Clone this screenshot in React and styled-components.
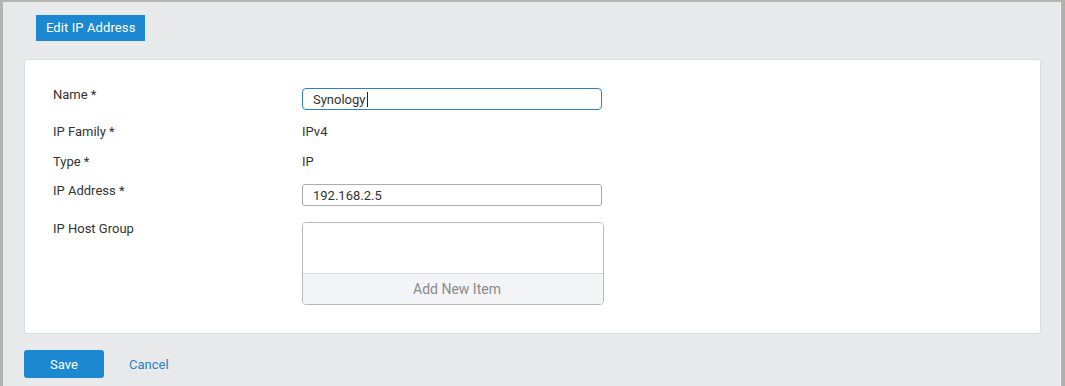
import React from "react";
import styled, { createGlobalStyle } from "styled-components";

const Global = createGlobalStyle`
  html, body { margin: 0; padding: 0; }
  body {
    font-family: Roboto, "Liberation Sans", Arial, sans-serif;
    background: #b4b4b0;
  }
  * { box-sizing: border-box; }
`;

const Frame = styled.div`
  min-height: 100vh;
  background: #e8e9eb;
  border-left: 3px solid #b4b4b0;
  border-top: 2px solid #b4b4b0;
  border-right: 4px solid #b0b0ac;
  border-top-left-radius: 3px;
  border-top-right-radius: 3px;
  box-shadow: inset -1px 0 0 #f2f2f2;
  padding: 13px 20px 8px 21px;
  display: flex;
  flex-direction: column;
`;

const Tab = styled.div`
  align-self: flex-start;
  margin-left: 12px;
  height: 26px;
  padding: 0 10px 0 10px;
  background: #1b88d1;
  color: #fff;
  font-size: 13px;
  letter-spacing: 0.1px;
  line-height: 26px;
`;

const Panel = styled.div`
  margin-top: 18px;
  background: #fff;
  border: 1px solid #dcdde0;
  border-radius: 3px;
  padding: 28px 28px 28px 28px;
  display: flex;
  flex-direction: column;
`;

const Row = styled.div`
  display: grid;
  grid-template-columns: 249px 1fr;
  align-items: start;
  margin-top: ${(p) => p.$gap || 0}px;
`;

const Label = styled.div`
  font-size: 13px;
  line-height: 14px;
  padding-bottom: 2px;
  color: #333;
`;

const Value = styled.div`
  font-size: 13px;
  line-height: 14px;
  padding-bottom: 2px;
  color: #333;
`;

const Field = styled.div`
  width: 300px;
  height: 22px;
  border: 1px solid ${(p) => (p.$focus ? "#2a7fc6" : "#a9abae")};
  border-radius: ${(p) => (p.$focus ? 4 : 3)}px;
  padding: 0 10px;
  display: flex;
  align-items: center;
  font-size: 13px;
  color: #333;
  background: #fff;
`;

const Caret = styled.span`
  display: inline-block;
  width: 1px;
  height: 15px;
  background: #222;
  margin-left: 1px;
`;

const ListBox = styled.div`
  width: 302px;
  height: 83px;
  border: 1px solid #b7babe;
  border-radius: 4px;
  display: flex;
  flex-direction: column;
  overflow: hidden;
`;

const ListBody = styled.div`
  flex: 1;
  background: #fff;
`;

const ListFooter = styled.div`
  height: 31px;
  border-top: 1px solid #d6d9dd;
  background: #f3f4f6;
  color: #888a8c;
  font-size: 14px;
  padding-left: 8px;
  display: flex;
  align-items: center;
  justify-content: center;
`;

const Actions = styled.div`
  margin-top: 16px;
  display: flex;
  align-items: center;
`;

const SaveButton = styled.button`
  width: 80px;
  height: 28px;
  border: none;
  border-radius: 3px;
  background: #1b88d1;
  color: #fff;
  font-family: inherit;
  font-size: 13px;
  padding: 0;
`;

const CancelLink = styled.a`
  margin-left: 25px;
  color: #2b7fc4;
  font-size: 13px;
  text-decoration: none;
`;

export default function App() {
  return (
    <>
      <Global />
      <Frame>
        <Tab>Edit IP Address</Tab>
        <Panel>
          <Row>
            <Label>Name *</Label>
            <Field $focus>
              Synology
              <Caret />
            </Field>
          </Row>
          <Row $gap={15}>
            <Label>IP Family *</Label>
            <Value>IPv4</Value>
          </Row>
          <Row $gap={14}>
            <Label>Type *</Label>
            <Value>IP</Value>
          </Row>
          <Row $gap={13}>
            <Label>IP Address *</Label>
            <Field>192.168.2.5</Field>
          </Row>
          <Row $gap={16}>
            <Label>IP Host Group</Label>
            <ListBox>
              <ListBody />
              <ListFooter>Add New Item</ListFooter>
            </ListBox>
          </Row>
        </Panel>
        <Actions>
          <SaveButton>Save</SaveButton>
          <CancelLink href="#">Cancel</CancelLink>
        </Actions>
      </Frame>
    </>
  );
}
